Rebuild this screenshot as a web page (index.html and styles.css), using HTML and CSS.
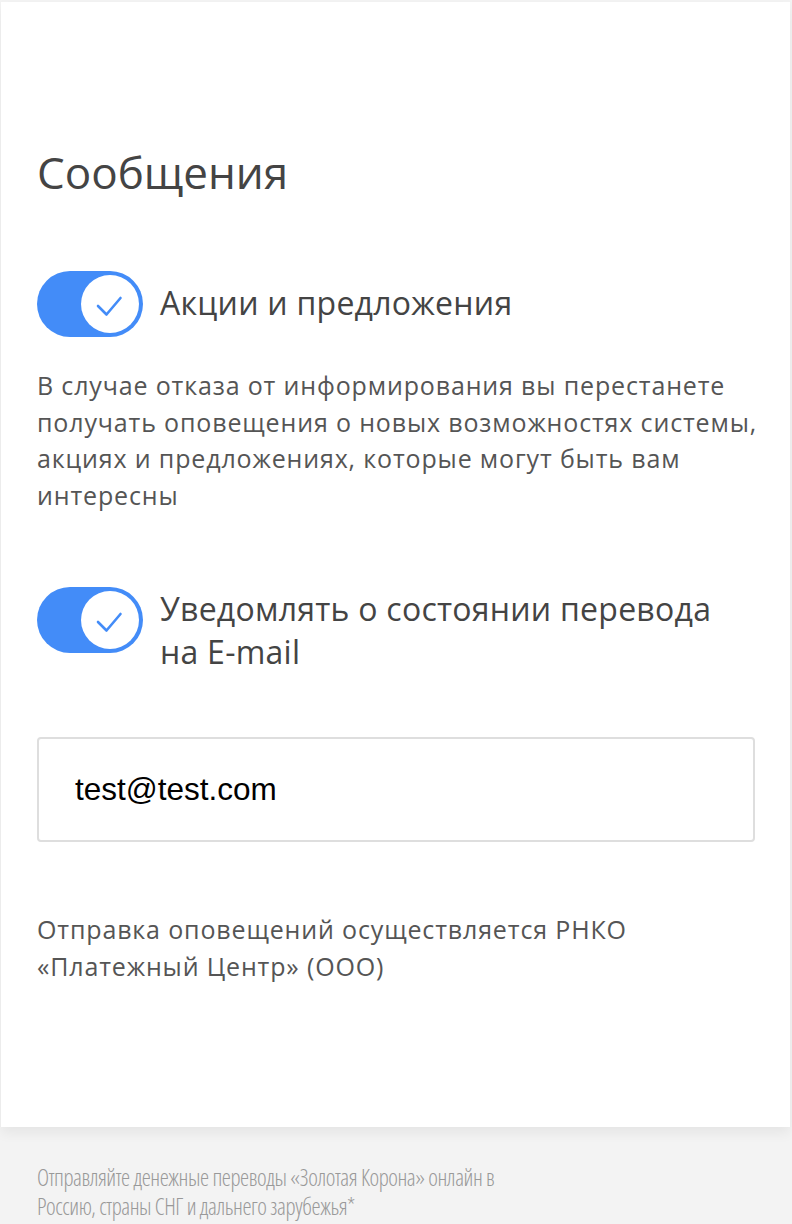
FILE: index.html
```html
<!DOCTYPE html>
<html lang="ru">
<head>
<meta charset="utf-8">
<link rel="stylesheet" href="styles.css">
</head>
<body>
<main class="card">
  <h1 class="title">Сообщения</h1>

  <div class="option">
    <span class="toggle"><span class="knob"><svg viewBox="0 0 58 58" width="58" height="58"><path d="M17 31 L25.5 39.5 L39.5 23" fill="none" stroke="#438cf8" stroke-width="2.6" stroke-linecap="round" stroke-linejoin="round"/></svg></span></span>
    <span class="option-label">Акции и предложения</span>
  </div>
  <p class="desc">В случае отказа от информирования вы перестанете получать оповещения о новых возможностях системы, акциях и предложениях, которые могут быть вам интересны</p>

  <div class="option option-email">
    <span class="toggle"><span class="knob"><svg viewBox="0 0 58 58" width="58" height="58"><path d="M17 31 L25.5 39.5 L39.5 23" fill="none" stroke="#438cf8" stroke-width="2.6" stroke-linecap="round" stroke-linejoin="round"/></svg></span></span>
    <span class="option-label">Уведомлять о состоянии перевода на E-mail</span>
  </div>

  <div class="field">test@test.com</div>

  <p class="note">Отправка оповещений осуществляется РНКО «Платежный Центр» (ООО)</p>
</main>
<footer class="footer">
  <p class="footer-text">Отправляйте денежные переводы «Золотая Корона» онлайн в Россию, страны СНГ и дальнего зарубежья*</p>
</footer>
</body>
</html>
```
FILE: styles.css
```css
html, body {
  margin: 0;
  padding: 0;
}
body {
  background: #f3f3f3;
  font-family: "Open Sans", "Noto Sans", sans-serif;
  color: #444;
  padding-top: 2px;
}
.card {
  background: #fff;
  margin: 0 2px 0 1px;
  height: 1125px;
  box-sizing: border-box;
  padding: 140px 36px 0 36px;
  box-shadow: 0 6px 12px rgba(0,0,0,0.06);
}
.title {
  margin: 0;
  font-size: 44px;
  font-weight: 400;
  line-height: 60px;
  color: #444;
}
.option {
  display: flex;
  align-items: flex-start;
  gap: 17px;
  margin-top: 69px;
}
.toggle {
  flex: none;
  width: 106px;
  height: 66px;
  border-radius: 33px;
  background: #438cf8;
  display: flex;
  align-items: center;
  justify-content: flex-end;
  padding: 4px;
  box-sizing: border-box;
}
.knob {
  width: 58px;
  height: 58px;
  border-radius: 50%;
  background: #fff;
  display: block;
}
.knob svg { display: block; }
.option-label {
  font-size: 32px;
  line-height: 43px;
  letter-spacing: 0.25px;
  color: #444;
  padding-top: 10px;
  max-width: 580px;
}
.desc {
  margin: 30px -24px 0 0;
  font-size: 25px;
  line-height: 36.5px;
  letter-spacing: 0.85px;
  color: #555;
}
.option-email {
  margin-top: 74px;
}
.option-email .option-label {
  padding-top: 0;
}
.field {
  margin-top: 64px;
  width: 718px;
  height: 105px;
  box-sizing: border-box;
  border: 2px solid #dedede;
  border-radius: 4px;
  padding: 0 36px;
  display: flex;
  align-items: center;
  font-family: "Liberation Sans", Arial, sans-serif;
  font-size: 31.5px;
  color: #000;
}
.note {
  margin: 69px 0 0;
  font-size: 25px;
  line-height: 37px;
  letter-spacing: 0.85px;
  color: #555;
}
.footer {
  padding: 36px 36px 0 37px;
}
.footer-text {
  margin: 0;
  max-width: 480px;
  font-family: "Open Sans", "Noto Sans", sans-serif;
  font-stretch: 75%;
  font-weight: 300;
  font-size: 23px;
  letter-spacing: -0.45px;
  line-height: 29px;
  color: #999;
}
```
